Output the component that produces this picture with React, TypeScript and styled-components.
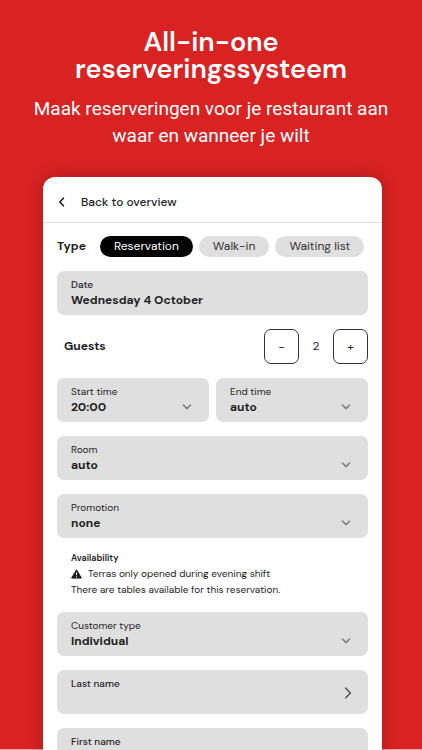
import React, { useState } from "react";
import styled, { createGlobalStyle } from "styled-components";

const GlobalStyle = createGlobalStyle`
  *, *::before, *::after { box-sizing: border-box; }
  body {
    margin: 0;
    background: #d92323;
    font-family: "DM Sans", Inter, sans-serif;
    color: #1e1e1e;
  }
  button, input, select { font: inherit; color: inherit; }
`;

const Page = styled.main`
  display: flex;
  flex-direction: column;
  height: 100vh;
  overflow: hidden;
  background: linear-gradient(#f3a3a3, #f3a3a3) bottom / 100% 1px no-repeat #d92323;
`;

const Hero = styled.header`
  padding: 28px 24px 0;
  text-align: center;
  color: #fff;
`;

const Title = styled.h1`
  margin: 0;
  font-size: 27px;
  font-weight: 600;
  line-height: 27px;
`;

const Subtitle = styled.p`
  margin: 13px 0 0;
  font-family: Roboto, sans-serif;
  font-size: 19px;
  line-height: 27px;
`;

const Card = styled.section`
  flex: 1 0 auto;
  margin: 28px 40px 0 43px;
  background: #fff;
  border-radius: 12px 12px 0 0;
  box-shadow: 0 0 16px rgba(60, 0, 0, 0.3);
`;

const BackButton = styled.button`
  display: flex;
  align-items: center;
  gap: 14px;
  width: 100%;
  height: 46px;
  padding: 4px 14px 0 12px;
  border: 0;
  border-bottom: 1px solid #dedede;
  background: none;
  font-size: 12px;
  font-weight: 500;
`;

const Form = styled.form`
  display: flex;
  flex-direction: column;
  gap: 14px;
  padding: 13px 14px;
`;

const TypeRow = styled.div`
  display: flex;
  align-items: center;
  gap: 6px;
  height: 21px;
`;

const RowTitle = styled.span`
  padding-bottom: 2px;
  font-size: 12px;
  font-weight: 700;
`;

const TypeTitle = styled(RowTitle)`
  width: 37px;
`;

const Pill = styled.button<{ $active: boolean }>`
  height: 21px;
  padding: 0 14px 2px;
  border: 0;
  border-radius: 11px;
  background: ${(p) => (p.$active ? "#000" : "#dfdfdf")};
  color: ${(p) => (p.$active ? "#fff" : "#333")};
  font-size: 12px;
  white-space: nowrap;
`;

const GuestsRow = styled.div`
  display: flex;
  align-items: center;
  height: 35px;
  padding-left: 7px;
`;

const Stepper = styled.div`
  display: flex;
  align-items: center;
  margin-left: auto;
`;

const StepButton = styled.button`
  width: 35px;
  height: 35px;
  padding: 0;
  border: 1px solid #333;
  border-radius: 7px;
  background: #fff;
  font-size: 12px;
`;

const Count = styled.output`
  width: 34px;
  padding-bottom: 2px;
  text-align: center;
  font-size: 12px;
`;

const Columns = styled.div`
  display: grid;
  grid-template-columns: 1fr 1fr;
  gap: 7px;
`;

const Field = styled.label`
  position: relative;
  display: block;
  height: 44px;
  padding: 6px 14px;
  border-radius: 7px;
  background: #dfdfdf;
`;

const FieldLabel = styled.span<{ $strong?: boolean }>`
  display: block;
  font-size: 10px;
  font-weight: ${(p) => (p.$strong ? 500 : 400)};
  line-height: 15px;
`;

const Input = styled.input`
  display: block;
  width: 100%;
  height: 16px;
  padding: 0;
  border: 0;
  background: transparent;
  font-size: 12px;
  font-weight: 700;
`;

const Select = styled.select`
  display: block;
  width: 100%;
  height: 16px;
  padding: 0;
  border: 0;
  appearance: none;
  background: transparent;
  font-size: 12px;
  font-weight: 700;
`;

const Marker = styled.span<{ $centered?: boolean }>`
  position: absolute;
  top: ${(p) => (p.$centered ? "2px" : "14px")};
  bottom: 0;
  right: ${(p) => (p.$centered ? "15px" : "16px")};
  display: flex;
  align-items: center;
  pointer-events: none;
`;

const Availability = styled.section`
  padding: 0 14px;
  font-size: 10px;
  line-height: 16px;
`;

const AvailabilityTitle = styled.h2`
  margin: 0 0 2px;
  font-size: 9px;
  font-weight: 600;
  line-height: 12px;
`;

const Notice = styled.p`
  display: flex;
  align-items: center;
  gap: 6px;
  margin: 0;
`;

type ChevronProps = { path: string; width: number; height: number; color: string };

const Chevron = ({ path, width, height, color }: ChevronProps) => (
  <svg width={width} height={height} viewBox={`0 0 ${width} ${height}`} fill="none" aria-hidden="true">
    <path d={path} stroke={color} strokeWidth="1.6" strokeLinecap="round" strokeLinejoin="round" />
  </svg>
);

const WarningIcon = () => (
  <svg width="11" height="10" viewBox="0 0 11 10" aria-hidden="true">
    <path d="M5.5.8 10.4 9.1H.6Z" fill="#1e1e1e" stroke="#1e1e1e" strokeLinejoin="round" />
    <path d="M5.5 3.5v2.7M5.5 7.3v1.1" stroke="#fff" strokeWidth="1" />
  </svg>
);

const SelectField = ({ label, options }: { label: string; options: string[] }) => (
  <Field>
    <FieldLabel>{label}</FieldLabel>
    <Select>
      {options.map((o) => (
        <option key={o}>{o}</option>
      ))}
    </Select>
    <Marker>
      <Chevron path="M2.4 2 6 5.6 9.6 2" width={12} height={8} color="#808080" />
    </Marker>
  </Field>
);

const NameField = ({ label, arrow }: { label: string; arrow?: boolean }) => (
  <Field>
    <FieldLabel $strong>{label}</FieldLabel>
    <Input type="text" />
    {arrow && (
      <Marker $centered>
        <Chevron path="M2.8 2.2 7.4 7 2.8 11.8" width={10} height={14} color="#555" />
      </Marker>
    )}
  </Field>
);

const TYPES = ["Reservation", "Walk-in", "Waiting list"];

export default function App() {
  const [type, setType] = useState(TYPES[0]);
  const [guests, setGuests] = useState(2);

  return (
    <Page>
      <GlobalStyle />
      <Hero>
        <Title>All-in-one reserveringssysteem</Title>
        <Subtitle>Maak reserveringen voor je restaurant aan waar en wanneer je wilt</Subtitle>
      </Hero>
      <Card>
        <BackButton type="button">
          <Chevron path="M8.4 2.2 4.8 6 8.4 9.8" width={12} height={12} color="#1e1e1e" />
          Back to overview
        </BackButton>
        <Form>
          <TypeRow role="group" aria-label="Type">
            <TypeTitle>Type</TypeTitle>
            {TYPES.map((t) => (
              <Pill key={t} type="button" $active={t === type} aria-pressed={t === type} onClick={() => setType(t)}>
                {t}
              </Pill>
            ))}
          </TypeRow>
          <Field>
            <FieldLabel $strong>Date</FieldLabel>
            <Input type="text" defaultValue="Wednesday 4 October" />
          </Field>
          <GuestsRow>
            <RowTitle>Guests</RowTitle>
            <Stepper>
              <StepButton type="button" aria-label="Fewer guests" onClick={() => setGuests(Math.max(1, guests - 1))}>
                −
              </StepButton>
              <Count>{guests}</Count>
              <StepButton type="button" aria-label="More guests" onClick={() => setGuests(guests + 1)}>
                +
              </StepButton>
            </Stepper>
          </GuestsRow>
          <Columns>
            <SelectField label="Start time" options={["20:00", "20:30", "21:00"]} />
            <SelectField label="End time" options={["auto", "22:00", "23:00"]} />
          </Columns>
          <SelectField label="Room" options={["auto"]} />
          <SelectField label="Promotion" options={["none"]} />
          <Availability>
            <AvailabilityTitle>Availability</AvailabilityTitle>
            <Notice>
              <WarningIcon />
              Terras only opened during evening shift
            </Notice>
            <Notice>There are tables available for this reservation.</Notice>
          </Availability>
          <SelectField label="Customer type" options={["Individual", "Company"]} />
          <NameField label="Last name" arrow />
          <NameField label="First name" />
        </Form>
      </Card>
    </Page>
  );
}
